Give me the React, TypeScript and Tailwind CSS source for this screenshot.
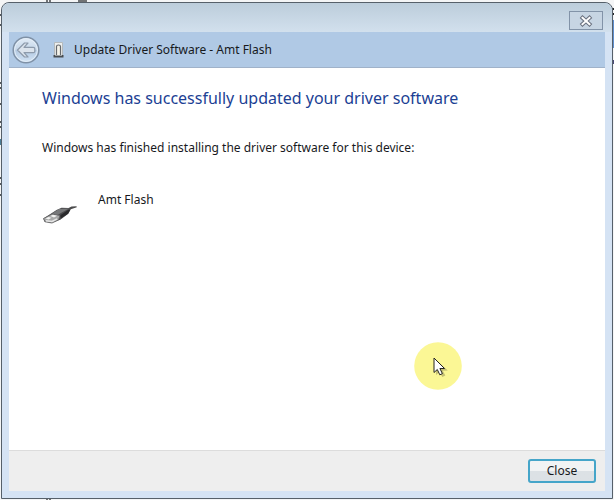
import { useState } from 'react';

function BackIcon() {
  return (
    <svg viewBox="0 0 28 28" className="size-7" aria-hidden="true">
      <defs>
        <linearGradient id="orb" x1="0" y1="0" x2="0" y2="1">
          <stop offset="0" stopColor="#e3edf7" />
          <stop offset="0.48" stopColor="#c6d7e9" />
          <stop offset="0.52" stopColor="#b4cae2" />
          <stop offset="1" stopColor="#d3e4f5" />
        </linearGradient>
      </defs>
      <circle cx="14" cy="14" r="12.8" fill="url(#orb)" stroke="#7f91a6" strokeWidth="1.5" />
      <circle cx="14" cy="14" r="11.4" fill="none" stroke="#e4eef8" strokeWidth="1" />
      <path
        d="M5.5 14l7-7h3.5l-4 4.3h9.3q1.5 0 1.5 1.5v2.4q0 1.5-1.5 1.5h-9.300l4 4.300h-3.500z"
        fill="#dbe3ec"
        stroke="#8d9aab"
        strokeWidth="1.2"
        strokeLinejoin="round"
      />
    </svg>
  );
}

function DeviceIcon() {
  return (
    <svg viewBox="0 0 16 18" className="h-[18px] w-4" aria-hidden="true">
      <path d="M4.5 1.5h8v13h-8z" fill="#eceeee" stroke="#b5babc" />
      <path d="M6.5 14V5.5q0-1.5 2-1.5t2 1.5V14" fill="#f5f3ea" stroke="#66696c" strokeWidth="1.2" />
      <path d="M3.5 14h10v2.5h-10z" fill="#484c50" />
      <path d="M5 14h7v1H5z" fill="#9ba0a3" />
    </svg>
  );
}

function UsbIcon() {
  return (
    <svg viewBox="0 0 36 22" className="h-[22px] w-9" aria-hidden="true">
      <path d="M1.5 14.5l13-8.5 5-2.2 7 .2 3-1.5 5-.2.3 1-6 2-2.5 4.5-8 6-9 3-7-1.3z" fill="#4b4b4d" />
      <path d="M10 9.5l7-4.5 10-.5-9 5-3 2z" fill="#77787a" />
      <path d="M18 11.5l8-5.5 2.2-.3-2.2 4-7 4.5z" fill="#29292b" />
      <path d="M1.5 14.5l8.5-4.5 8 1.5-1.5 4.5-6.5 3-7-1.2z" fill="#a9aaaa" stroke="#5f6061" strokeWidth=".8" />
      <path d="M3.5 14.5l3-1.5 3 .8-3 1.7zM8.5 12l2.5-1.2 4 .9-3 1.7z" fill="#f3f3f2" />
      <path d="M4 16.7l6 .7 5-2.5" fill="none" stroke="#e6e6e6" strokeWidth="1.5" />
    </svg>
  );
}

function Pointer() {
  return (
    <svg viewBox="0 0 48 48" className="size-12" aria-hidden="true">
      <circle cx="24" cy="24" r="23.8" fill="#fbf795" />
      <path d="M22 18v15l3.5-3 2.8 5 3-1.5-2.5-4.8 5-.2z" fill="#8d8954" opacity=".5" />
      <path
        d="M20 16v14.5l3.3-3 2.5 5.3 2.6-1.2-2.5-5.1h4.6z"
        fill="#fff"
        stroke="#25251f"
        strokeLinejoin="round"
      />
    </svg>
  );
}

// slivers of the window underneath that show around the dialog's frame
function Desktop() {
  return (
    <div className="absolute inset-0 -z-10 overflow-hidden bg-[#f4f5f6]" aria-hidden="true">
      <svg className="absolute left-0 top-0 h-52 w-2" viewBox="0 0 8 208">
        <path d="M0 15h2M0 25h2M0 83h2M0 88h2M0 104h2M0 122h2M0 127h2M0 178h2M0 184h2M0 195h2" stroke="#55595d" strokeWidth="2" />
        <path d="M0 139h2v6H0z" fill="#4b7d96" />
      </svg>
      <svg className="absolute right-0 top-0 h-52 w-2" viewBox="0 0 8 208">
        <path d="M6 9h2M6 14h2" stroke="#26282a" strokeWidth="2" />
        <path d="M6 20h2v28H6z" fill="#5f8fd0" />
        <path d="M6 60h2v4H6z" fill="#4a4a78" />
      </svg>
      <svg className="absolute left-11 top-0 h-1 w-12" viewBox="0 0 48 4">
        <path d="M3 0v2M6 0v2M34 1h9" stroke="#45484b" strokeWidth="1.5" />
      </svg>
      <svg className="absolute bottom-0 left-11 h-1 w-4" viewBox="0 0 16 4">
        <path d="M3 2v2M6 2v2" stroke="#45484b" strokeWidth="1.5" />
      </svg>
    </div>
  );
}

export default function App() {
  const [open, setOpen] = useState(true);

  return (
    <main className="relative isolate flex min-h-screen px-px pb-px pt-0.5 font-['Noto_Sans','Open_Sans',sans-serif] text-[#17191d]">
      <Desktop />
      {open && (
        <section
          aria-labelledby="title"
          className="flex grow flex-col rounded-t-lg border border-[#56606a] bg-[#d5e3f4] px-[7px] pb-[7px]"
        >
          <div className="-mx-[7px] flex h-[29px] items-end justify-end rounded-t-lg bg-linear-to-b from-[#bccddb] to-[#d2e0ed] px-[9px] pb-[2px]">
            <button
              aria-label="Close window"
              className="flex h-[19px] w-[34px] items-center justify-center border border-[#8293a8] bg-[#c7d5e3]"
              onClick={() => setOpen(false)}
            >
              <svg viewBox="0 0 14 12" className="h-3 w-3.5" aria-hidden="true">
                <path d="M3.5 2.8l7 6.4m0-6.4l-7 6.4" stroke="#6b7280" strokeWidth="4" strokeLinecap="square" />
                <path d="M3.5 2.8l7 6.4m0-6.4l-7 6.4" stroke="#fff" strokeWidth="2" strokeLinecap="square" />
              </svg>
            </button>
          </div>
          <header className="flex h-9 items-center border-b border-[#a0b2c9] bg-[#b0c9e5] px-[3px]">
            <button aria-label="Back">
              <BackIcon />
            </button>
            <span className="ml-2.5 mr-2">
              <DeviceIcon />
            </span>
            <h1 id="title" className="text-[12px] leading-5">
              Update Driver Software - Amt Flash
            </h1>
          </header>
          <div className="relative grow bg-white px-[33px] pb-32 pt-[18px]">
            <h2 className="text-[16px] leading-6 text-[#1c3f94]">Windows has successfully updated your driver software</h2>
            <p className="mt-7 text-[12px] leading-5">
              Windows has finished installing the driver software for this device:
            </p>
            <div className="mt-8 flex gap-5">
              <span className="pt-3.5">
                <UsbIcon />
              </span>
              <p className="text-[12px] leading-5">Amt Flash</p>
            </div>
            <div className="absolute bottom-15 left-[68%]">
              <Pointer />
            </div>
          </div>
          <footer className="flex h-[41px] items-center justify-end border-t border-[#dcdcdc] bg-[#eeeeee] px-[9px]">
            <button
              className="h-6 w-[68px] rounded-[3px] border-2 border-[#45a5c9] bg-linear-to-b from-[#f1f3f4] from-50% to-[#dce1e5] to-50% text-[12px] leading-5"
              onClick={() => setOpen(false)}
            >
              Close
            </button>
          </footer>
        </section>
      )}
    </main>
  );
}
